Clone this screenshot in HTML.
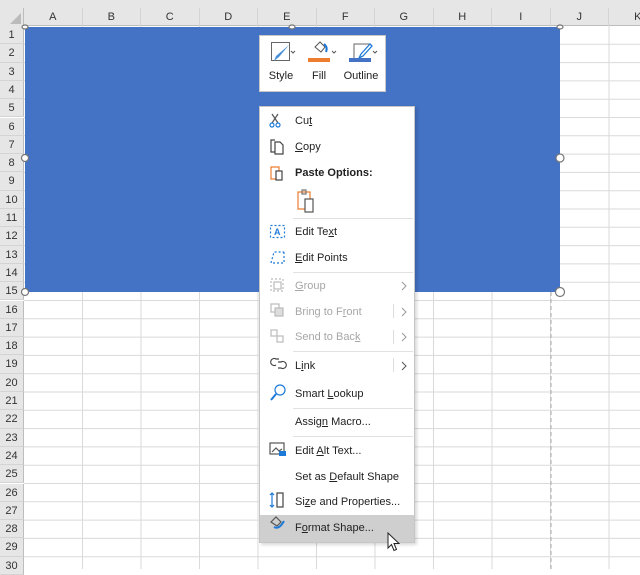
<!DOCTYPE html>
<html><head><style>
body{margin:0;width:640px;height:569px;overflow:hidden;background:#fff;font-family:"Liberation Sans",sans-serif;position:relative}
.a{position:absolute}
.ch{position:absolute;top:8px;height:18px;font-size:11px;color:#333;text-align:center;line-height:18px;border-right:1px solid #d4d4d4;box-sizing:border-box}
.rh{position:absolute;left:0;width:24px;font-size:11px;color:#333;text-align:center;border-bottom:1px solid #d4d4d4;box-sizing:border-box;background:#e6e6e6;border-right:1px solid #bdbdbd}
.mi{position:absolute;left:295px;font-size:11px;color:#222;line-height:14px}
.dis{color:#a6a6a6}
.sep{position:absolute;left:293px;width:120px;height:1px;background:#e1e1e1}
</style></head><body>
<div class="a" style="left:0;top:0;width:640px;height:8px;background:#e6e6e6"></div>
<div class="a" style="left:0;top:8px;width:640px;height:18px;background:#e6e6e6;border-bottom:1px solid #bdbdbd;box-sizing:border-box"></div>
<div class="a" style="left:0;top:8px;width:24px;height:18px;background:#e6e6e6;border-right:1px solid #bdbdbd;box-sizing:border-box"></div>
<svg class="a" style="left:10px;top:13px" width="12" height="12"><polygon points="11,0 11,11 0,11" fill="#bbb"/></svg>
<div class="ch" style="left:24px;width:58.5px">A</div>
<div class="ch" style="left:82.5px;width:58.5px">B</div>
<div class="ch" style="left:141px;width:58.5px">C</div>
<div class="ch" style="left:199.5px;width:58.5px">D</div>
<div class="ch" style="left:258px;width:58.5px">E</div>
<div class="ch" style="left:316.5px;width:58.5px">F</div>
<div class="ch" style="left:375px;width:58.5px">G</div>
<div class="ch" style="left:433.5px;width:58.5px">H</div>
<div class="ch" style="left:492px;width:58.5px">I</div>
<div class="ch" style="left:550.5px;width:58.5px">J</div>
<div class="ch" style="left:609px;width:58.5px">K</div>
<svg class="a" style="left:24px;top:26px" width="616" height="543">
<g stroke="#dadada" stroke-width="1">
<line x1="58.5" y1="0" x2="58.5" y2="543"/><line x1="117" y1="0" x2="117" y2="543"/><line x1="175.5" y1="0" x2="175.5" y2="543"/><line x1="234" y1="0" x2="234" y2="543"/><line x1="292.5" y1="0" x2="292.5" y2="543"/><line x1="351" y1="0" x2="351" y2="543"/><line x1="409.5" y1="0" x2="409.5" y2="543"/><line x1="468" y1="0" x2="468" y2="543"/><line x1="526.5" y1="0" x2="526.5" y2="543"/><line x1="585" y1="0" x2="585" y2="543"/>
<line x1="0" y1="18.3" x2="616" y2="18.3"/><line x1="0" y1="36.6" x2="616" y2="36.6"/><line x1="0" y1="54.9" x2="616" y2="54.9"/><line x1="0" y1="73.2" x2="616" y2="73.2"/><line x1="0" y1="91.5" x2="616" y2="91.5"/><line x1="0" y1="109.8" x2="616" y2="109.8"/><line x1="0" y1="128.1" x2="616" y2="128.1"/><line x1="0" y1="146.4" x2="616" y2="146.4"/><line x1="0" y1="164.7" x2="616" y2="164.7"/><line x1="0" y1="183" x2="616" y2="183"/><line x1="0" y1="201.3" x2="616" y2="201.3"/><line x1="0" y1="219.6" x2="616" y2="219.6"/><line x1="0" y1="237.9" x2="616" y2="237.9"/><line x1="0" y1="256.2" x2="616" y2="256.2"/><line x1="0" y1="274.5" x2="616" y2="274.5"/><line x1="0" y1="292.8" x2="616" y2="292.8"/><line x1="0" y1="311.1" x2="616" y2="311.1"/><line x1="0" y1="329.4" x2="616" y2="329.4"/><line x1="0" y1="347.7" x2="616" y2="347.7"/><line x1="0" y1="366" x2="616" y2="366"/><line x1="0" y1="384.3" x2="616" y2="384.3"/><line x1="0" y1="402.6" x2="616" y2="402.6"/><line x1="0" y1="420.9" x2="616" y2="420.9"/><line x1="0" y1="439.2" x2="616" y2="439.2"/><line x1="0" y1="457.5" x2="616" y2="457.5"/><line x1="0" y1="475.8" x2="616" y2="475.8"/><line x1="0" y1="494.1" x2="616" y2="494.1"/><line x1="0" y1="512.4" x2="616" y2="512.4"/><line x1="0" y1="530.7" x2="616" y2="530.7"/>
</g>
<line x1="527" y1="266" x2="527" y2="543" stroke="#aaa" stroke-dasharray="4,3"/>
</svg>
<div id="rows"></div>
<script>
var h='';for(var i=1;i<=30;i++){h+='<div class="rh" style="top:'+(26+18.3*(i-1))+'px;height:18.3px;line-height:18px">'+i+'</div>';}
document.getElementById('rows').innerHTML=h;
</script>
<div class="a" style="left:25px;top:27px;width:535px;height:265px;background:#4472c4"></div>
<svg class="a" style="left:18px;top:20px" width="550" height="280">
<g fill="#fff" stroke="#777" stroke-width="1.2">
<circle cx="7" cy="138" r="3.5"/><circle cx="7" cy="272" r="3.5"/><circle cx="542" cy="138" r="4"/><circle cx="542" cy="272" r="4.5"/>
<ellipse cx="7" cy="7" rx="3" ry="2"/><ellipse cx="542" cy="7" rx="3" ry="2"/><ellipse cx="274" cy="7" rx="3" ry="2"/>
</g></svg>
<!-- mini toolbar -->
<div class="a" style="left:259px;top:35px;width:127px;height:57px;background:#fff;border:1px solid #c6c6c6;box-sizing:border-box"></div>
<svg class="a" style="left:259px;top:35px" width="127" height="57">
<rect x="12.5" y="7.5" width="18" height="18" fill="none" stroke="#666"/>
<path d="M30 10 L20 22 L15 26 L17 21 Z" fill="#4a90d9"/>
<path d="M32 16 l2 2 l2 -2" fill="none" stroke="#555"/>
<path d="M56 12 l5 -5 l5 5 l-4 5 z" fill="none" stroke="#555"/><path d="M65 9 q4 3 2 8" fill="none" stroke="#1e7ad8" stroke-width="2"/>
<rect x="49" y="23" width="22" height="4" fill="#ed7d31"/>
<path d="M73 16 l2 2 l2 -2" fill="none" stroke="#555"/>
<path d="M95 23 v-14 h16" fill="none" stroke="#666"/><path d="M111 9 l-9 10 l-2 4 l4 -2 l9 -10 z" fill="none" stroke="#1e7ad8" stroke-width="1.3"/>
<rect x="90" y="23" width="22" height="4" fill="#4472c4"/>
<path d="M114 16 l2 2 l2 -2" fill="none" stroke="#555"/>
<text x="22" y="44" font-size="11" text-anchor="middle" fill="#222" font-family="Liberation Sans">Style</text>
<text x="60" y="44" font-size="11" text-anchor="middle" fill="#222" font-family="Liberation Sans">Fill</text>
<text x="102" y="44" font-size="11" text-anchor="middle" fill="#222" font-family="Liberation Sans">Outline</text>
</svg>
<!-- context menu -->
<div class="a" style="left:259px;top:106px;width:156px;height:437px;background:#fff;border:1px solid #c6c6c6;box-sizing:border-box;box-shadow:2px 2px 3px rgba(0,0,0,.15)"></div>
<div class="a" style="left:260px;top:515px;width:154px;height:27px;background:#cfcfcf"></div>
<div class="mi" style="top:114px">Cu<u>t</u></div>
<div class="mi" style="top:140px"><u>C</u>opy</div>
<div class="mi" style="top:166px;font-weight:bold">Paste Options:</div>
<div class="sep" style="top:218px"></div>
<div class="mi" style="top:225px">Edit Te<u>x</u>t</div>
<div class="mi" style="top:251px"><u>E</u>dit Points</div>
<div class="sep" style="top:272px"></div>
<div class="mi dis" style="top:279px"><u>G</u>roup</div>
<div class="mi dis" style="top:305px">Bring to F<u>r</u>ont</div>
<div class="mi dis" style="top:330px">Send to Bac<u>k</u></div>
<div class="a" style="left:393px;top:304px;width:1px;height:14px;background:#ddd"></div>
<div class="a" style="left:393px;top:330px;width:1px;height:14px;background:#ddd"></div>
<div class="a" style="left:393px;top:358px;width:1px;height:14px;background:#ddd"></div>
<div class="sep" style="top:351px"></div>
<div class="mi" style="top:359px">L<u>i</u>nk</div>
<div class="mi" style="top:387px">Smart <u>L</u>ookup</div>
<div class="sep" style="top:408px"></div>
<div class="mi" style="top:415px">Assig<u>n</u> Macro...</div>
<div class="sep" style="top:436px"></div>
<div class="mi" style="top:444px">Edit <u>A</u>lt Text...</div>
<div class="mi" style="top:470px">Set as <u>D</u>efault Shape</div>
<div class="mi" style="top:495px">Si<u>z</u>e and Properties...</div>
<div class="mi" style="top:521px">F<u>o</u>rmat Shape...</div>
<svg class="a" style="left:259px;top:106px" width="156" height="437">
<g fill="none" stroke="#999" stroke-width="1">
<path d="M143 176 l4 4 l-4 4"/><path d="M143 202 l4 4 l-4 4"/><path d="M143 227 l4 4 l-4 4"/>
<path d="M143 256 l4 4 l-4 4" stroke="#555"/>
</g>
<g fill="none" stroke-width="1.2">
<path d="M13 8 l6 9 M19 8 l-6 9" stroke="#555"/><circle cx="13" cy="19" r="2" stroke="#1e7ad8"/><circle cx="19" cy="19" r="2" stroke="#1e7ad8"/>
<path d="M16 34 h-4 v12 h4" stroke="#444"/><path d="M16 36 h5 l3 3 v9 h-8 z" stroke="#444"/>
<path d="M12 61 h8 v12 h-8 z" stroke="#ed7d31"/><rect x="17" y="65" width="6" height="9" stroke="#444" fill="#fff"/>
<path d="M39 86 h12 v17 h-12 z" stroke="#ed7d31"/><path d="M43 84 h4 v4 h-4z" stroke="#777"/><rect x="46" y="93" width="8" height="13" stroke="#555" fill="#fff"/>
<rect x="11.5" y="119.5" width="14" height="12" stroke="#1e7ad8" stroke-dasharray="2,2"/>
<text x="15" y="129" font-size="9" fill="#1e7ad8" stroke="none" font-family="Liberation Sans" font-weight="bold">A</text>
<path d="M12 157 l3 -11 h10 M25 146 v11 h-13" stroke="#1e7ad8" stroke-dasharray="2,2"/>
<rect x="12" y="173" width="12" height="12" stroke="#bbb" stroke-dasharray="2,2"/><rect x="15" y="176" width="7" height="7" stroke="#bbb"/>
<rect x="12" y="198" width="8" height="8" stroke="#bbb"/><rect x="16" y="202" width="8" height="8" stroke="#bbb" fill="#ddd"/>
<rect x="12" y="224" width="6" height="6" stroke="#bbb"/><rect x="18" y="230" width="6" height="6" stroke="#bbb"/>
<path d="M17 259 a3.5 3.5 0 1 1 0 -6 h3 M19 256 h3 a3.5 3.5 0 1 1 0 6 h-3" stroke="#444"/>
<circle cx="21" cy="284" r="5" stroke="#1e7ad8"/><path d="M17 288 l-5 6" stroke="#1e7ad8" stroke-width="2"/>
<rect x="11" y="337" width="14" height="11" stroke="#555"/><path d="M13 346 l4 -4 l3 3 l3 -2" stroke="#555"/><rect x="20" y="345" width="7" height="5" fill="#1e7ad8" stroke="none"/>
<path d="M13 387 v14 M11 389 l2 -2 l2 2 M11 399 l2 2 l2 -2" stroke="#1e7ad8"/><rect x="18" y="387" width="6" height="14" stroke="#444"/>
<path d="M12 416 l5 -5 l5 5 l-4 4 z" stroke="#555"/><path d="M15 421 q5 3 10 -6" stroke="#1e7ad8" stroke-width="2"/>
</g>
</svg>
<svg class="a" style="left:386px;top:532px" width="16" height="22">
<path d="M2 1 v15 l3.5 -3.5 l2.5 6 l2.5 -1 l-2.5 -6 h5 z" fill="#fff" stroke="#222" stroke-width="1"/>
</svg>
</body></html>
